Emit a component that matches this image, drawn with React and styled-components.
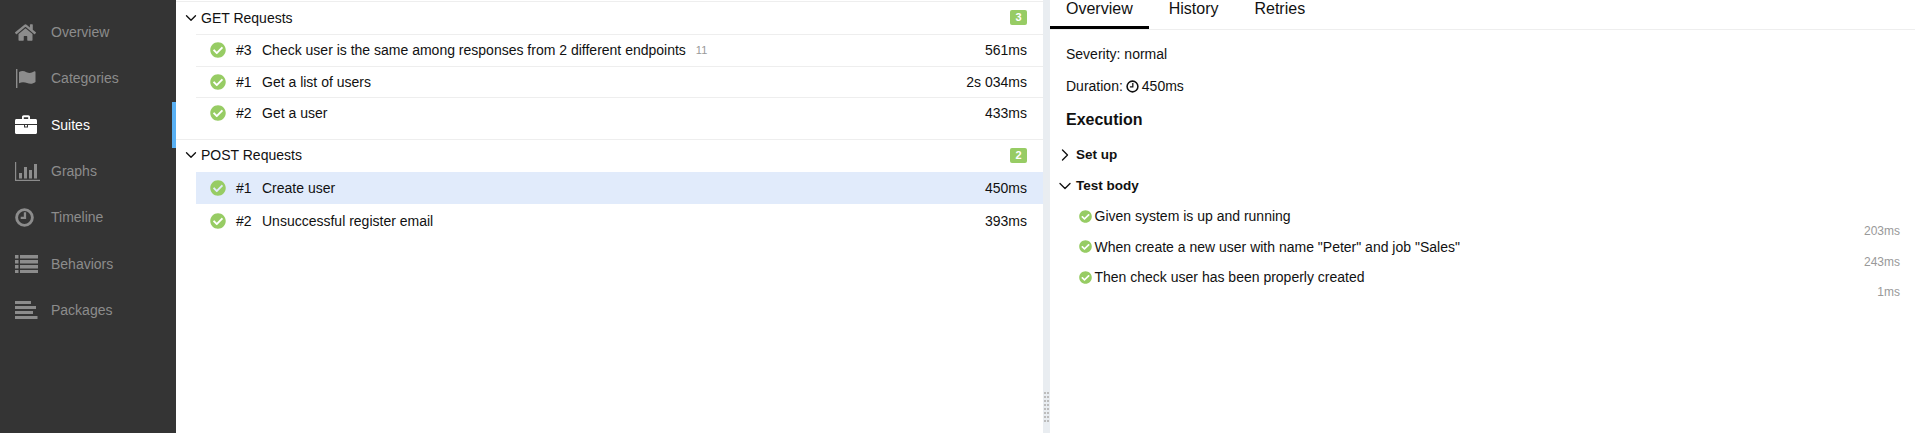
import React from 'react'
import styled, { createGlobalStyle } from 'styled-components'
import { ChevronDown, ChevronRight } from 'lucide-react'
import { FaHome, FaCheckCircle } from 'react-icons/fa'

const Global = createGlobalStyle`
  html, body {
    margin: 0;
    height: 100%;
    overflow: hidden;
    background: #fff;
    font-family: "Liberation Sans", Arial, sans-serif;
    font-size: 14px;
    color: #111;
  }
`

const Page = styled.div`
  display: flex;
  width: 1915px;
  height: 433px;
  overflow: hidden;
`

const Sidebar = styled.nav`
  flex: 0 0 176px;
  background: #343434;
  padding-top: 9px;
`

const NavItem = styled.div`
  display: flex;
  align-items: center;
  height: 46.3px;
  padding-left: 15px;
  box-sizing: border-box;
  color: ${(p) => (p.$active ? '#fff' : '#8c8c8c')};
  border-right: 4px solid ${(p) => (p.$active ? '#59b0f3' : 'transparent')};
`

const NavIcon = styled.span`
  flex: 0 0 36px;
  display: flex;
  align-items: center;
`

const ListPane = styled.section`
  flex: 0 0 867px;
  padding-top: 1px;
`

const Group = styled.div`
  border-top: 1px solid #eee;
  padding-bottom: 10px;
`

const GroupHead = styled.div`
  display: flex;
  align-items: center;
  gap: 1px;
  height: 32px;
  padding: 0 16px 1px 6px;
  box-sizing: border-box;
`

const Badge = styled.span`
  margin-left: auto;
  width: 17px;
  height: 15px;
  background: #97cc64;
  color: #fff;
  border-radius: 2px;
  font-size: 11px;
  font-weight: bold;
  text-align: center;
  line-height: 15px;
`

const Row = styled.div`
  display: flex;
  align-items: center;
  height: ${(p) => (p.$plain ? 32.5 : 31.5)}px;
  box-sizing: border-box;
  margin-left: 20px;
  padding: 0 16px 0 14px;
  background: ${(p) => (p.$selected ? '#e1ebfb' : 'transparent')};
  border-top: 1px solid ${(p) => (p.$plain ? 'transparent' : '#eee')};
`

const Num = styled.span`
  width: 26px;
  margin-left: 10px;
`

const Retries = styled.span`
  margin-left: 10px;
  font-size: 11px;
  color: #999;
`

const Time = styled.span`
  margin-left: auto;
`

const Splitter = styled.div`
  flex: 0 0 7px;
  background: #e9edf1;
  display: flex;
  align-items: flex-end;
  justify-content: center;
  padding-bottom: 11px;
  box-sizing: border-box;
`

const Grip = styled.div`
  width: 5px;
  height: 30px;
  background-image: linear-gradient(transparent 2px, #e9edf1 2px),
    linear-gradient(90deg, #bcbcbc 2px, #e9edf1 2px);
  background-size: 100% 4px, 3px 100%;
`

const Detail = styled.section`
  flex: 1;
`

const Tabs = styled.div`
  display: flex;
  gap: 4px;
  height: 30px;
  border-bottom: 1px solid #eee;
  box-sizing: border-box;
`

const Tab = styled.div`
  padding: 0 16px;
  height: 29px;
  box-sizing: border-box;
  font-size: 16px;
  line-height: 17px;
  border-bottom: 3px solid ${(p) => (p.$active ? '#000' : 'transparent')};
`

const Body = styled.div`
  padding: 16px 15px 0 16px;
`

const Meta = styled.div`
  height: 32px;
  line-height: 16px;
  display: flex;
  gap: 3px;
  align-items: flex-start;
`

const MetaIcon = styled.span`
  display: flex;
  margin-top: 2px;
`

const Heading = styled.h3`
  margin: 1px 0 10px;
  font-size: 16px;
  line-height: 18px;
`

const Stage = styled.div`
  display: flex;
  align-items: center;
  font-size: 13.5px;
  font-weight: bold;
  height: 31px;
  margin-left: -11px;
  gap: 1px;
`

const Steps = styled.div`
  margin-top: 7px;
`

const Step = styled.div`
  height: 30.6px;
  padding-left: 13px;
`

const StepLine = styled.div`
  display: flex;
  align-items: center;
  gap: 2.500px;
  height: 16px;
`

const StepTime = styled.div`
  text-align: right;
  font-size: 12px;
  color: #999;
  line-height: 14px;
`

const Bars = ({ rows }) => (
  <svg width="23" height="18" viewBox="0 0 23 18" fill="currentColor">
    {rows.map(([x, y, w, h]) => (
      <rect key={`${x}-${y}`} x={x} y={y} width={w} height={h} />
    ))}
  </svg>
)

const FlagIcon = () => (
  <svg width="22" height="19" viewBox="0 0 22 19" fill="currentColor">
    <rect x="1" y="0" width="1.4" height="19" />
    <path d="M4 3c3-1.500 5-1 7.500.2 2.500 1.100 5 1 7.500-.700 1-.500 1.500-.200 1.500.700V13c-2.500 2-5.500 2.300-8.500 1-2.500-1-5-1.300-8 .200z" />
  </svg>
)

const BriefcaseIcon = () => (
  <svg width="22" height="19" viewBox="0 0 22 19" fill="currentColor">
    <path d="M7 4V2c0-1 .700-1.700 1.700-1.700h4.600c1 0 1.700.700 1.700 1.700v2h-1.800V2.200H8.800V4z" />
    <path d="M1.500 4h19c.900 0 1.500.600 1.500 1.500V9H0V5.500C0 4.600.600 4 1.500 4z" />
    <path d="M0 10h9v2.500h4V10h9v7.500c0 .900-.600 1.500-1.500 1.500h-19C.600 19 0 18.400 0 17.500z" />
    <rect x="10" y="10" width="2" height="1.500" />
  </svg>
)

const GraphIcon = () => (
  <svg width="25" height="19" viewBox="0 0 25 19" fill="currentColor">
    <rect x="0" y="0" width="1.200" height="19" />
    <rect x="0" y="17.800" width="25" height="1.200" />
    <rect x="4" y="11" width="3" height="5.500" />
    <rect x="9" y="5" width="3" height="11.500" />
    <rect x="14" y="8" width="3" height="8.500" />
    <rect x="19" y="2" width="3" height="14.500" />
  </svg>
)

const ClockIcon = ({ size, weight }) => (
  <svg width={size} height={size} viewBox="0 0 20 20" fill="none" stroke="currentColor">
    <circle cx="10" cy="10" r="8.300" strokeWidth={weight} />
    <path d="M10.500 4.500v6H6" strokeWidth={weight * 0.8} />
  </svg>
)

const behaviorRows = [
  [0, 0, 3.5, 3.5], [5, 0, 18, 3.5],
  [0, 5, 3.5, 3.5], [5, 5, 18, 3.5],
  [0, 10, 3.5, 3.5], [5, 10, 18, 3.5],
  [0, 15, 3.5, 3], [5, 15, 18, 3],
]

const packageRows = [
  [0, 0, 16, 3], [0, 5, 21, 3], [0, 10, 18, 3], [0, 15, 22.5, 3],
]

const navItems = [
  ['Overview', <FaHome size={21} />],
  ['Categories', <FlagIcon />],
  ['Suites', <BriefcaseIcon />, true],
  ['Graphs', <GraphIcon />],
  ['Timeline', <ClockIcon size={19} weight={3} />],
  ['Behaviors', <Bars rows={behaviorRows} />],
  ['Packages', <Bars rows={packageRows} />],
]

const groups = [
  {
    name: 'GET Requests',
    tests: [
      { n: '#3', title: 'Check user is the same among responses from 2 different endpoints', retries: 11, time: '561ms' },
      { n: '#1', title: 'Get a list of users', time: '2s 034ms' },
      { n: '#2', title: 'Get a user', time: '433ms' },
    ],
  },
  {
    name: 'POST Requests',
    tests: [
      { n: '#1', title: 'Create user', time: '450ms', selected: true, plain: true },
      { n: '#2', title: 'Unsuccessful register email', time: '393ms', plain: true },
    ],
  },
]

const steps = [
  ['Given system is up and running', '203ms'],
  ['When create a new user with name "Peter" and job "Sales"', '243ms'],
  ['Then check user has been properly created', '1ms'],
]

const App = () => (
  <Page>
    <Global />
    <Sidebar>
      {navItems.map(([label, icon, active]) => (
        <NavItem key={label} $active={active}>
          <NavIcon>{icon}</NavIcon>
          {label}
        </NavItem>
      ))}
    </Sidebar>
    <ListPane>
      {groups.map((g) => (
        <Group key={g.name}>
          <GroupHead>
            <ChevronDown size={18} strokeWidth={1.8} />
            {g.name}
            <Badge>{g.tests.length}</Badge>
          </GroupHead>
          {g.tests.map((t) => (
            <Row key={t.title} $selected={t.selected} $plain={t.plain}>
              <FaCheckCircle size={16} color="#97cc64" />
              <Num>{t.n}</Num>
              {t.title}
              {t.retries && <Retries>{t.retries}</Retries>}
              <Time>{t.time}</Time>
            </Row>
          ))}
        </Group>
      ))}
    </ListPane>
    <Splitter>
      <Grip />
    </Splitter>
    <Detail>
      <Tabs>
        <Tab $active>Overview</Tab>
        <Tab>History</Tab>
        <Tab>Retries</Tab>
      </Tabs>
      <Body>
        <Meta>Severity: normal</Meta>
        <Meta>
          Duration:
          <MetaIcon>
            <ClockIcon size={13} weight={2.4} />
          </MetaIcon>
          450ms
        </Meta>
        <Heading>Execution</Heading>
        <Stage>
          <ChevronRight size={20} strokeWidth={1.6} />
          Set up
        </Stage>
        <Stage>
          <ChevronDown size={20} strokeWidth={1.6} />
          Test body
        </Stage>
        <Steps>
          {steps.map(([text, time]) => (
            <Step key={text}>
              <StepLine>
                <FaCheckCircle size={13} color="#97cc64" />
                {text}
              </StepLine>
              <StepTime>{time}</StepTime>
            </Step>
          ))}
        </Steps>
      </Body>
    </Detail>
  </Page>
)

export default App
